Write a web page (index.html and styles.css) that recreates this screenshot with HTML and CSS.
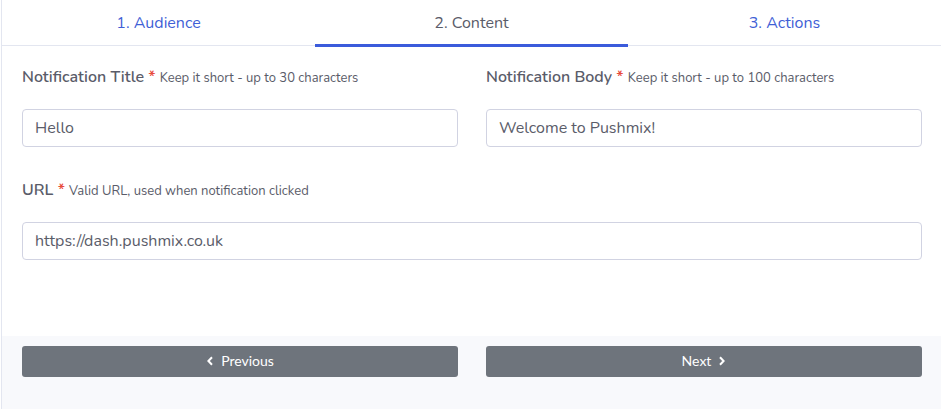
FILE: index.html
```html
<!DOCTYPE html>
<html lang="en">
<head>
<meta charset="utf-8">
<title>Pushmix - Content</title>
<link rel="stylesheet" href="styles.css">
</head>
<body>
<div class="card">
  <nav class="tabs">
    <a class="tab">1. Audience</a>
    <a class="tab active">2. Content</a>
    <a class="tab">3. Actions</a>
  </nav>
  <div class="card-body">
    <div class="row">
      <div class="field">
        <label class="label">Notification Title <span class="req">*</span> <small class="hint">Keep it short - up to 30 characters</small></label>
        <input class="input" type="text" value="Hello">
      </div>
      <div class="field">
        <label class="label">Notification Body <span class="req">*</span> <small class="hint">Keep it short - up to 100 characters</small></label>
        <input class="input" type="text" value="Welcome to Pushmix!">
      </div>
    </div>
    <div class="field url-field">
      <label class="label">URL <span class="req">*</span> <small class="hint">Valid URL, used when notification clicked</small></label>
      <input class="input" type="text" value="https://dash.pushmix.co.uk">
    </div>
  </div>
  <div class="card-footer">
    <button class="btn" type="button"><svg class="chev" viewBox="0 0 8 10" width="8" height="10"><path d="M6 1.2 L2.4 5 L6 8.8" fill="none" stroke="#fff" stroke-width="2"/></svg>Previous</button>
    <button class="btn" type="button">Next<svg class="chev after" viewBox="0 0 8 10" width="8" height="10"><path d="M2 1.2 L5.6 5 L2 8.8" fill="none" stroke="#fff" stroke-width="2"/></svg></button>
  </div>
</div>
</body>
</html>
```

FILE: styles.css
```css
* { box-sizing: border-box; }
html, body { margin: 0; padding: 0; background: #fff; }
body {
  font-family: "Nunito", "Open Sans", "Noto Sans", sans-serif;
  color: #5a5c69;
  width: 941px;
  height: 409px;
  overflow: hidden;
}
.card {
  margin-left: 1px;
  border-left: 1px solid #e3e6f0;
  height: 409px;
  display: flex;
  flex-direction: column;
}
.tabs {
  display: grid;
  grid-template-columns: 1fr 1fr 1fr;
  border-bottom: 1px solid #e3e6f0;
  height: 46px;
}
.tab {
  display: flex;
  align-items: center;
  justify-content: center;
  height: 45px;
  padding-top: 1px;
  font-size: 16px;
  color: #3f5fd6;
  text-decoration: none;
}
.tab.active {
  color: #5a5c69;
  border-bottom: 3px solid #3b5bdb;
  height: 47px;
  margin-bottom: -2px;
  padding-top: 2px;
}
.card-body {
  padding: 19px 19px 0 20px;
  flex: 1;
}
.row {
  display: grid;
  grid-template-columns: 1fr 1fr;
  column-gap: 28px;
}
.field { display: flex; flex-direction: column; }
.label {
  display: block;
  font-size: 16px;
  font-weight: 600;
  color: #5a5c69;
  line-height: 23px;
  height: 24px;
  padding-top: 1px;
  margin-bottom: 20px;
}
.req { color: #e74a3b; line-height: 1; }
.hint {
  font-size: 13px;
  font-weight: 400;
  color: #5a5c69;
  line-height: 1;
}
.input {
  height: 38px;
  border: 1px solid #d1d3e2;
  border-radius: 4px;
  padding: 0 12px;
  font-family: inherit;
  font-size: 16px;
  color: #5a5c69;
  background: #fff;
  outline: none;
}
.url-field { margin-top: 31px; }
.card-footer {
  background: #f8f9fc;
  height: 73px;
  padding: 10px 19px 0 20px;
  display: grid;
  grid-template-columns: 1fr 1fr;
  column-gap: 28px;
  align-items: start;
}
.btn {
  height: 31px;
  border: none;
  border-radius: 3px;
  background: #6e747c;
  color: #fff;
  font-family: "Lato", "Liberation Sans", sans-serif;
  font-size: 14px;
  line-height: 1;
  padding: 0 0 1px;
  display: flex;
  align-items: center;
  justify-content: center;
  gap: 7px;
  cursor: pointer;
}
.chev { display: block; }
```
